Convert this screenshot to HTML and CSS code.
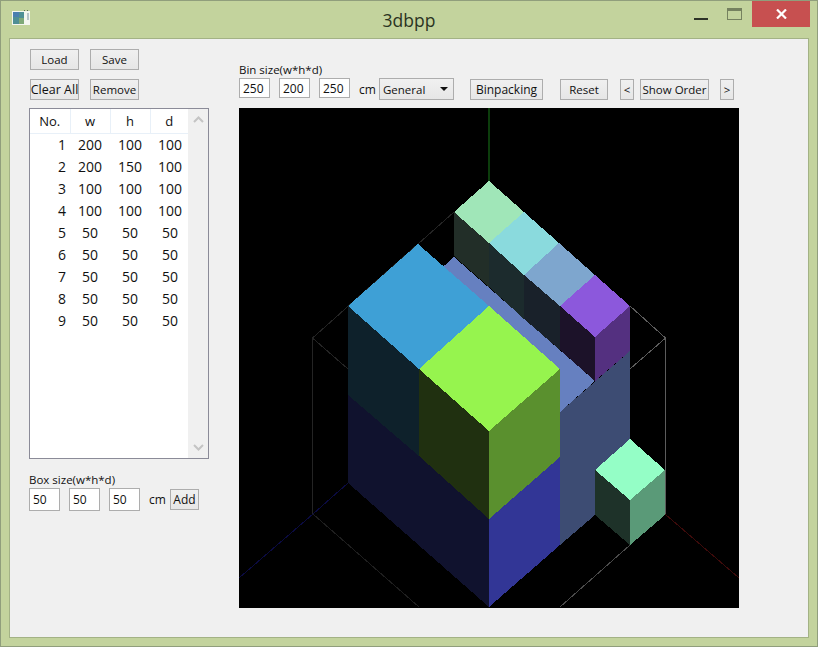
FILE: index.html
```html
<!DOCTYPE html>
<html lang="en">
<head>
    <meta charset="UTF-8">
    <title>3dbpp</title>
    <link rel="stylesheet" href="styles.css">
</head>
<body>
    <div class="window">
        <div class="titlebar">
            <svg class="app-icon" width="18" height="16" viewBox="0 0 18 16">
                <rect x="0" y="1" width="18" height="14" fill="#f4f6f0"/>
                <rect x="1" y="2" width="11" height="12" fill="#4f8f95"/>
                <rect x="1" y="2" width="6" height="5" fill="#4a7fb0"/>
                <rect x="7" y="8" width="5" height="6" fill="#7fa878"/>
                <rect x="15" y="3" width="2" height="7" fill="#b8c4c8"/>
                <rect x="12" y="0" width="1" height="1" fill="#60685a"/>
                <rect x="15" y="0" width="1" height="1" fill="#60685a"/>
            </svg>
            <span class="title">3dbpp</span>
            <div class="window-controls">
                <svg class="ctl-min" width="14" height="2"><rect width="14" height="2" fill="#2d3327"/></svg>
                <svg class="ctl-max" width="15" height="13">
                    <rect x="0.5" y="0.5" width="14" height="11" fill="none" stroke="#75815f"/>
                    <rect x="0" y="0" width="15" height="3" fill="#75815f"/>
                </svg>
                <div class="ctl-close">
                    <svg width="11" height="10" viewBox="0 0 11 10">
                        <path d="M1 0.5 L10 9.5 M10 0.5 L1 9.5" stroke="#fff" stroke-width="2.2" fill="none"/>
                    </svg>
                </div>
            </div>
        </div>
        <div class="client">
            <div class="left-panel">
                <div class="btn-row">
                    <button class="btn btn-side">Load</button>
                    <button class="btn btn-side">Save</button>
                </div>
                <div class="btn-row">
                    <button class="btn btn-side btn-clear"><span>Clear All</span></button>
                    <button class="btn btn-side">Remove</button>
                </div>
                <div class="box-list">
                    <table class="box-table">
                        <thead>
                            <tr><th>No.</th><th>w</th><th>h</th><th>d</th></tr>
                        </thead>
                        <tbody>
                            <tr><td class="num">1</td><td>200</td><td>100</td><td>100</td></tr>
                            <tr><td class="num">2</td><td>200</td><td>150</td><td>100</td></tr>
                            <tr><td class="num">3</td><td>100</td><td>100</td><td>100</td></tr>
                            <tr><td class="num">4</td><td>100</td><td>100</td><td>100</td></tr>
                            <tr><td class="num">5</td><td>50</td><td>50</td><td>50</td></tr>
                            <tr><td class="num">6</td><td>50</td><td>50</td><td>50</td></tr>
                            <tr><td class="num">7</td><td>50</td><td>50</td><td>50</td></tr>
                            <tr><td class="num">8</td><td>50</td><td>50</td><td>50</td></tr>
                            <tr><td class="num">9</td><td>50</td><td>50</td><td>50</td></tr>
                        </tbody>
                    </table>
                    <div class="scrollbar">
                        <svg width="11" height="7" viewBox="0 0 11 7"><path d="M1 6 L5.5 1.5 L10 6" fill="none" stroke="#c4c4c4" stroke-width="2"/></svg>
                        <svg width="11" height="7" viewBox="0 0 11 7"><path d="M1 1 L5.5 5.5 L10 1" fill="none" stroke="#c4c4c4" stroke-width="2"/></svg>
                    </div>
                </div>
                <div class="field-label box-label">Box size(w*h*d)</div>
                <div class="size-row">
                    <input class="size-input" value="50">
                    <input class="size-input" value="50">
                    <input class="size-input" value="50">
                    <span class="unit">cm</span>
                    <button class="btn btn-add">Add</button>
                </div>
            </div>
            <div class="right-panel">
                <div class="field-label">Bin size(w*h*d)</div>
                <div class="size-row top-row">
                    <input class="size-input bin-input" value="250">
                    <input class="size-input bin-input" value="200">
                    <input class="size-input bin-input" value="250">
                    <span class="unit">cm</span>
                    <div class="combo">General<span class="combo-arrow"></span></div>
                    <button class="btn btn-pack">Binpacking</button>
                    <button class="btn btn-reset">Reset</button>
                    <button class="btn btn-arrow">&lt;</button>
                    <button class="btn btn-order">Show Order</button>
                    <button class="btn btn-arrow">&gt;</button>
                </div>
                <svg class="view" width="500" height="500" viewBox="239 108 500 500" shape-rendering="crispEdges">
                    <rect x="239" y="108" width="500" height="500" fill="#000"/>

                    <!-- axes -->
                    <path d="M489 108 V181" stroke="#0c3d0c" stroke-width="2" fill="none"/>
                    <path d="M313 514 L239 578" stroke="#0a0a40" fill="none"/>
                    <path d="M665 514 L739 578" stroke="#3d0a0a" fill="none"/>

                    <!-- bin frame -->
                    <path d="M454 212 L312.5 338 V514 M312.5 338 L348 369" stroke="#242424" fill="none"/>
                    <path d="M313 514 L419 607" stroke="#1e1e1e" fill="none"/>
                    <path d="M313 514 L348 483" stroke="#0a0a40" fill="none"/>
                    <path d="M630 306 L665.5 338 V514 M665.5 338 L630 369" stroke="#5c5c5c" fill="none"/>
                    <path d="M630 545 L560 607" stroke="#4a4a4a" fill="none"/>

                    <!-- box 2 -->
                    <polygon points="560,412 630,351 630,480 595,515 560,545" fill="#3d4c73"/>
                    <polygon points="454,257 595,381 560,412 419,288" fill="#6680c0"/>

                    <!-- row of small boxes on the back -->
                    <polygon points="454,212 489,243 489,287 454,256" fill="#222e28"/>
                    <polygon points="489,243 524,275 524,319 489,287" fill="#1c2b2d"/>
                    <polygon points="524,275 560,306 560,350 524,319" fill="#19212a"/>
                    <polygon points="560,306 595,337 595,381 560,350" fill="#1c1229"/>
                    <polygon points="595,337 630,306 630,351 595,381" fill="#543080"/>
                    <polygon points="489,181 524,212 489,243 454,212" fill="#a0e6b8"/>
                    <polygon points="524,212 559,243 524,275 489,243" fill="#8adadd"/>
                    <polygon points="559,243 595,275 560,306 524,275" fill="#7ea6ce"/>
                    <polygon points="595,275 630,306 595,337 560,306" fill="#8c58dc"/>

                    <!-- bottom box, its top edge runs under the boxes above -->
                    <polygon points="348,385 489,509 489,607 348,483" fill="#10122e"/>
                    <polygon points="489,519 560,457 560,545 489,607" fill="#323696"/>

                    <!-- big blue box -->
                    <polygon points="348,306 419,369 419,456 348,395" fill="#0e212b"/>
                    <polygon points="418,244 489,306 419,369 348,306" fill="#3ea0d6"/>

                    <!-- green box -->
                    <polygon points="419,369 489,431 489,519 419,456" fill="#203010"/>
                    <polygon points="489,431 560,369 560,457 489,519" fill="#5a902e"/>
                    <polygon points="489,306 560,369 489,431 419,369" fill="#96f44e"/>

                    <!-- small box front -->
                    <polygon points="595,470 630,500 630,545 595,515" fill="#1e3229"/>
                    <polygon points="630,500 665,470 665,515 630,545" fill="#5a9a78"/>
                    <polygon points="630,439 665,470 630,500 595,470" fill="#94fec6"/>
                </svg>
            </div>
        </div>
    </div>
</body>
</html>
```

FILE: styles.css
```css
body {
    margin: 0;
    font-family: "Open Sans", "Noto Sans", sans-serif;
    font-size: 11.5px;
    color: #111;
}
.window {
    width: 818px;
    height: 647px;
    box-sizing: border-box;
    background-color: #c3d39d;
    border: 1px solid #909e7c;
    display: flex;
    flex-direction: column;
}
.titlebar {
    height: 37px;
    flex: none;
    display: flex;
    align-items: flex-start;
    justify-content: space-between;
    position: relative;
}
.app-icon {
    margin: 9px 0 0 11px;
}
.title {
    position: absolute;
    left: 0;
    right: 0;
    top: 7px;
    text-align: center;
    font-size: 17.5px;
    line-height: 24px;
    color: #2b3322;
}
.window-controls {
    display: flex;
    align-items: flex-start;
    margin-right: 7px;
}
.ctl-min {
    margin: 17px 0 0 0;
}
.ctl-max {
    margin: 7px 0 0 19px;
}
.ctl-close {
    width: 58px;
    height: 26px;
    margin-left: 10px;
    background-color: #c75050;
    display: flex;
    align-items: center;
    justify-content: center;
}
.client {
    flex: 1;
    margin: 0 8px 8px 8px;
    background-color: #f0f0f0;
    border: 1px solid #a3b285;
    display: flex;
    padding: 10px 0 0 19px;
}
.left-panel {
    width: 180px;
    flex: none;
}
.right-panel {
    margin-left: 30px;
    padding-top: 14px;
}
.btn-row {
    display: flex;
    gap: 11px;
    margin: 0 0 9px 1px;
}
.btn {
    font-family: inherit;
    font-size: 11.5px;
    color: #111;
    height: 21px;
    padding: 0;
    box-sizing: border-box;
    background: linear-gradient(#f0f0f0, #e6e6e6);
    border: 1px solid #adadad;
    white-space: nowrap;
    overflow: hidden;
}
.btn-side {
    width: 49px;
}
.btn-clear {
    display: flex;
    align-items: center;
    justify-content: center;
    font-size: 12.5px;
}
.btn-clear span {
    flex: none;
}
.box-list {
    height: 351px;
    box-sizing: border-box;
    margin-top: -1px;
    background-color: #fff;
    border: 1px solid #8b8b98;
    display: flex;
    justify-content: space-between;
}
.box-table {
    width: 158px;
    flex: none;
    table-layout: fixed;
    border-collapse: collapse;
    align-self: flex-start;
    font-size: 14px;
}
.box-table th {
    width: 40px;
    height: 24px;
    box-sizing: border-box;
    padding: 0;
    font-weight: normal;
    font-size: 13px;
    border-right: 1px solid #e8f0f8;
    border-bottom: 1px solid #e8f0f8;
}
.box-table th:last-child {
    width: 38px;
    border-right: none;
}
.box-table td {
    height: 22px;
    padding: 0;
    text-align: center;
    line-height: 22px;
}
.box-table td:last-child {
    padding-left: 2px;
}
.box-table td.num {
    text-align: right;
    padding-right: 4px;
}
.scrollbar {
    width: 20px;
    background-color: #f0f0f0;
    display: flex;
    flex-direction: column;
    align-items: center;
    justify-content: space-between;
    padding: 7px 0;
    box-sizing: border-box;
}
.field-label {
    line-height: 14px;
}
.box-label {
    margin-top: 14px;
}
.size-row {
    display: flex;
    align-items: center;
    margin-top: 1px;
}
.size-input {
    width: 31px;
    height: 23px;
    box-sizing: border-box;
    margin-right: 9px;
    padding: 0 0 0 3px;
    font-family: inherit;
    font-size: 12px;
    color: #111;
    background-color: #fff;
    border: 1px solid #adadad;
    border-radius: 0;
    outline: none;
}
.bin-input {
    height: 20px;
    align-self: flex-start;
}
.unit {
    font-size: 12px;
    width: 21px;
}
.btn-add {
    width: 29px;
    font-size: 12px;
}
.top-row {
    height: 22px;
    margin-top: 1px;
    margin-bottom: 8px;
}
.top-row .unit {
    width: 20px;
}
.combo {
    width: 75px;
    height: 22px;
    box-sizing: border-box;
    border: 1px solid #adadad;
    background: linear-gradient(#f0f0f0, #e6e6e6);
    font-size: 11.5px;
    line-height: 22px;
    padding-left: 3px;
    position: relative;
}
.combo-arrow {
    position: absolute;
    right: 5px;
    top: 8px;
    border-left: 4px solid transparent;
    border-right: 4px solid transparent;
    border-top: 4px solid #111;
}
.btn-pack {
    width: 73px;
    margin-left: 16px;
    margin-top: 1px;
    font-size: 12px;
}
.btn-reset {
    width: 48px;
    margin-left: 17px;
    margin-top: 1px;
}
.btn-arrow {
    width: 14px;
    margin-left: 12px;
    margin-top: 1px;
}
.btn-order {
    width: 69px;
    margin-left: 6px;
    margin-top: 1px;
}
.btn-order + .btn-arrow {
    margin-left: 11px;
}
.view {
    display: block;
}
```
